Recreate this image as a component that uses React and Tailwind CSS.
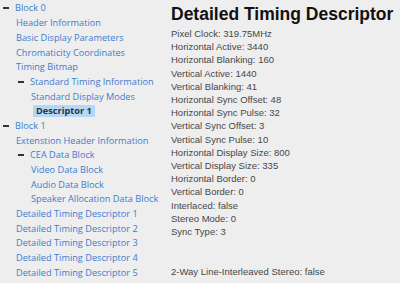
import React from 'react';

const Dash = () => <span className="block shrink-0 w-[6px] h-[2px] bg-[#333] mr-[6px]" />;

function Node({ label, indent, dash, selected }) {
  return (
    <div className="h-[14.7px] flex items-center whitespace-nowrap" style={{ paddingLeft: indent }}>
      {dash && <Dash />}
      {selected ? (
        <span className="bg-[#b5d8f7] text-[#333] font-bold px-[3px] leading-[12px]">{label}</span>
      ) : (
        <span className="text-[#3d7ccf]">{label}</span>
      )}
    </div>
  );
}

const tree = [
  { label: 'Block 0', indent: 3, dash: true },
  { label: 'Header Information', indent: 16 },
  { label: 'Basic Display Parameters', indent: 16 },
  { label: 'Chromaticity Coordinates', indent: 16 },
  { label: 'Timing Bitmap', indent: 16 },
  { label: 'Standard Timing Information', indent: 18, dash: true },
  { label: 'Standard Display Modes', indent: 31 },
  { label: 'Descriptor 1', indent: 33, selected: true },
  { label: 'Block 1', indent: 3, dash: true },
  { label: 'Extenstion Header Information', indent: 16 },
  { label: 'CEA Data Block', indent: 18, dash: true },
  { label: 'Video Data Block', indent: 31 },
  { label: 'Audio Data Block', indent: 31 },
  { label: 'Speaker Allocation Data Block', indent: 31 },
  { label: 'Detailed Timing Descriptor 1', indent: 16 },
  { label: 'Detailed Timing Descriptor 2', indent: 16 },
  { label: 'Detailed Timing Descriptor 3', indent: 16 },
  { label: 'Detailed Timing Descriptor 4', indent: 16 },
  { label: 'Detailed Timing Descriptor 5', indent: 16 },
];

const fields = [
  'Pixel Clock: 319.75MHz',
  'Horizontal Active: 3440',
  'Horizontal Blanking: 160',
  'Vertical Active: 1440',
  'Vertical Blanking: 41',
  'Horizontal Sync Offset: 48',
  'Horizontal Sync Pulse: 32',
  'Vertical Sync Offset: 3',
  'Vertical Sync Pulse: 10',
  'Horizontal Display Size: 800',
  'Vertical Display Size: 335',
  'Horizontal Border: 0',
  'Vertical Border: 0',
  'Interlaced: false',
  'Stereo Mode: 0',
  'Sync Type: 3',
];

export default function App() {
  return (
    <div className="w-[400px] h-[283px] bg-[#eeeeee] flex overflow-hidden">
      <div className="w-[166px] shrink-0 text-[9.2px] font-['Open_Sans',sans-serif] pt-[1px]">
        {tree.map((n, i) => (
          <Node key={i} {...n} />
        ))}
      </div>
      <div className="pl-[5px] font-['Liberation_Sans',Arial,sans-serif] text-[#474747]">
        <h1 className="text-[17.5px] font-bold text-[#111] leading-[22px] mt-[3px] mb-[2px]">Detailed Timing Descriptor</h1>
        <div className="text-[9.5px] leading-[13.2px]">
          {fields.map((f) => (
            <div key={f}>{f}</div>
          ))}
          <div className="mt-[26.4px]">2-Way Line-Interleaved Stereo: false</div>
        </div>
      </div>
    </div>
  );
}
